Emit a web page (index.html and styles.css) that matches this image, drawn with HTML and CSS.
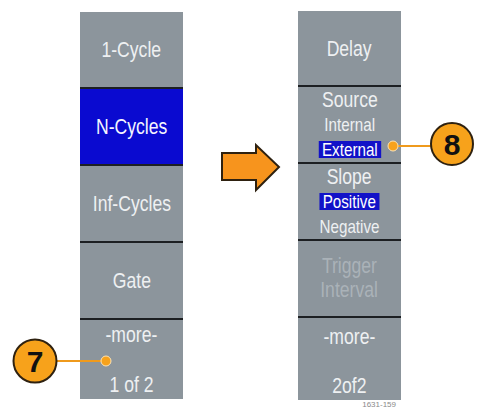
FILE: index.html
```html
<!DOCTYPE html>
<html lang="en">
<head>
    <meta charset="UTF-8">
    <meta name="viewport" content="width=device-width, initial-scale=1.0">
    <title>Burst Mode Menus</title>
    <link rel="stylesheet" href="styles.css">
</head>
<body>
    <div class="stage">
        <div class="menu menu-left">
            <div class="cell"><span>1-Cycle</span></div>
            <div class="cell cell-active"><span>N-Cycles</span></div>
            <div class="cell"><span>Inf-Cycles</span></div>
            <div class="cell"><span>Gate</span></div>
            <div class="cell cell-more">
                <span>-more-</span>
                <span>1 of 2</span>
            </div>
        </div>

        <div class="arrow-col">
            <svg class="arrow" width="64" height="52" viewBox="0 0 64 52">
                <polygon points="3,11 37,11 37,3 60,25 37,48 37,38 3,38" fill="#f7941d" stroke="#2e2110" stroke-width="2" stroke-linejoin="miter"/>
            </svg>
        </div>

        <div class="right-col">
            <div class="menu menu-right">
                <div class="cell"><span>Delay</span></div>
                <div class="cell">
                    <span>Source</span>
                    <span class="opt">Internal</span>
                    <span class="opt opt-on">External</span>
                </div>
                <div class="cell">
                    <span>Slope</span>
                    <span class="opt opt-on">Positive</span>
                    <span class="opt">Negative</span>
                </div>
                <div class="cell cell-dim">
                    <span>Trigger</span>
                    <span>Interval</span>
                </div>
                <div class="cell cell-more cell-more-low">
                    <span>-more-</span>
                    <span>2of2</span>
                </div>
            </div>
            <div class="caption">1631-159</div>
        </div>

        <svg class="callout callout-7" width="120" height="50" viewBox="0 0 120 50">
            <line x1="56" y1="25" x2="102" y2="25" stroke="#ef9a1c" stroke-width="2"/>
            <circle cx="106" cy="25" r="5" fill="#f7a21b" stroke="#fde3b5" stroke-width="1"/>
            <circle cx="35" cy="25" r="21.5" fill="#f7a21b" stroke="#2e2110" stroke-width="2"/>
            <text x="35" y="36" text-anchor="middle" class="callout-num">7</text>
        </svg>

        <svg class="callout callout-8" width="92" height="50" viewBox="0 0 92 50">
            <line x1="10" y1="26" x2="46" y2="26" stroke="#ef9a1c" stroke-width="2"/>
            <circle cx="8" cy="26" r="5" fill="#f7a21b" stroke="#fde3b5" stroke-width="1"/>
            <circle cx="67" cy="24" r="21" fill="#f7a21b" stroke="#2e2110" stroke-width="2"/>
            <text x="67" y="35" text-anchor="middle" class="callout-num">8</text>
        </svg>
    </div>
</body>
</html>
```

FILE: styles.css
```css
body {
    margin: 0;
    background: #ffffff;
    font-family: "Liberation Sans", Arial, sans-serif;
}
.stage {
    position: relative;
    width: 477px;
    height: 411px;
    display: flex;
    align-items: flex-start;
    padding-left: 80px;
    box-sizing: border-box;
}
.menu {
    width: 103px;
    display: flex;
    flex-direction: column;
    background: #8c959c;
}
.menu-left {
    margin-top: 12px;
    height: 387px;
}
.right-col {
    margin-top: 11px;
    display: flex;
    flex-direction: column;
}
.menu-right {
    height: 389px;
}
.cell {
    flex: 1;
    display: flex;
    flex-direction: column;
    align-items: center;
    justify-content: center;
    color: #eef0f2;
    font-size: 22px;
    line-height: 25px;
}
/* the menu font is a narrow one */
.cell span {
    display: inline-block;
    transform: scaleX(0.8);
    white-space: nowrap;
}
.cell + .cell {
    border-top: 2px solid #1c1f22;
}
.cell-active {
    background: #0a0ad0;
    color: #f4f4ff;
}
.cell-dim {
    color: #aab2b8;
    line-height: 24px;
}
.cell-more {
    justify-content: space-between;
    padding: 2px 0;
}
.cell-more-low {
    padding-top: 6px;
}
.opt {
    font-size: 19px;
    line-height: 25px;
}
.cell .opt-on {
    background: #1212c8;
    color: #ffffff;
    padding: 0 4px;
    line-height: 17px;
    margin: 4px 0;
}
.arrow-col {
    width: 115px;
    padding-top: 142px;
    padding-left: 36px;
    box-sizing: border-box;
}
.arrow {
    display: block;
}
.caption {
    font-size: 8px;
    color: #8a8a8a;
    text-align: right;
    padding-right: 5px;
    line-height: 10px;
}
.callout {
    position: absolute;
}
.callout-7 {
    left: 0;
    top: 336px;
}
.callout-8 {
    left: 385px;
    top: 120px;
}
.callout-num {
    font-weight: bold;
    font-size: 30px;
    fill: #111111;
}
```
